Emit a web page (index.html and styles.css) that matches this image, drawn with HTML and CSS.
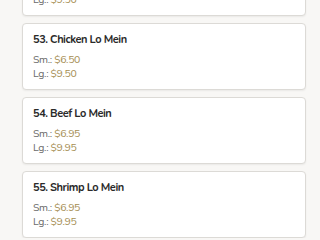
FILE: index.html
```html
<!DOCTYPE html>
<html lang="en">
<head>
  <meta charset="UTF-8">
  <meta name="viewport" content="width=device-width, initial-scale=1.0">
  <title>Lo Mein</title>
  <link rel="stylesheet" href="styles.css">
</head>
<body>
  <div class="menu-list">
    <div class="menu-item">
      <h3 class="item-name">52. Roast Pork Lo Mein</h3>
      <div class="price-row">Sm.: <span class="price">$6.50</span></div>
      <div class="price-row">Lg.: <span class="price">$9.50</span></div>
    </div>
    <div class="menu-item">
      <h3 class="item-name">53. Chicken Lo Mein</h3>
      <div class="price-row">Sm.: <span class="price">$6.50</span></div>
      <div class="price-row">Lg.: <span class="price">$9.50</span></div>
    </div>
    <div class="menu-item">
      <h3 class="item-name">54. Beef Lo Mein</h3>
      <div class="price-row">Sm.: <span class="price">$6.95</span></div>
      <div class="price-row">Lg.: <span class="price">$9.95</span></div>
    </div>
    <div class="menu-item">
      <h3 class="item-name">55. Shrimp Lo Mein</h3>
      <div class="price-row">Sm.: <span class="price">$6.95</span></div>
      <div class="price-row">Lg.: <span class="price">$9.95</span></div>
    </div>
  </div>
</body>
</html>
```
FILE: styles.css
```css
body {
  font-family: "Nunito", "Lato", sans-serif;
  background-color: #f8f7f5;
  margin: 0;
  padding: 0 14px 0 22px;
}
.menu-list {
  display: flex;
  flex-direction: column;
  gap: 7px;
  margin-top: -51px;
}
.menu-item {
  background-color: #fff;
  border: 1px solid #dcdad6;
  border-radius: 4px;
  box-shadow: 0 1px 2px rgba(0,0,0,0.06);
  padding: 8px 10px;
  height: 67px;
  box-sizing: border-box;
}
.item-name {
  margin: 0 0 6px;
  font-size: 11px;
  line-height: 15px;
  font-weight: 700;
  letter-spacing: -0.45px;
  color: #2a2a2a;
}
.price-row {
  font-size: 10.5px;
  line-height: 14px;
  letter-spacing: -0.35px;
  color: #6b6b6b;
}
.price {
  color: #a58d52;
}
```
